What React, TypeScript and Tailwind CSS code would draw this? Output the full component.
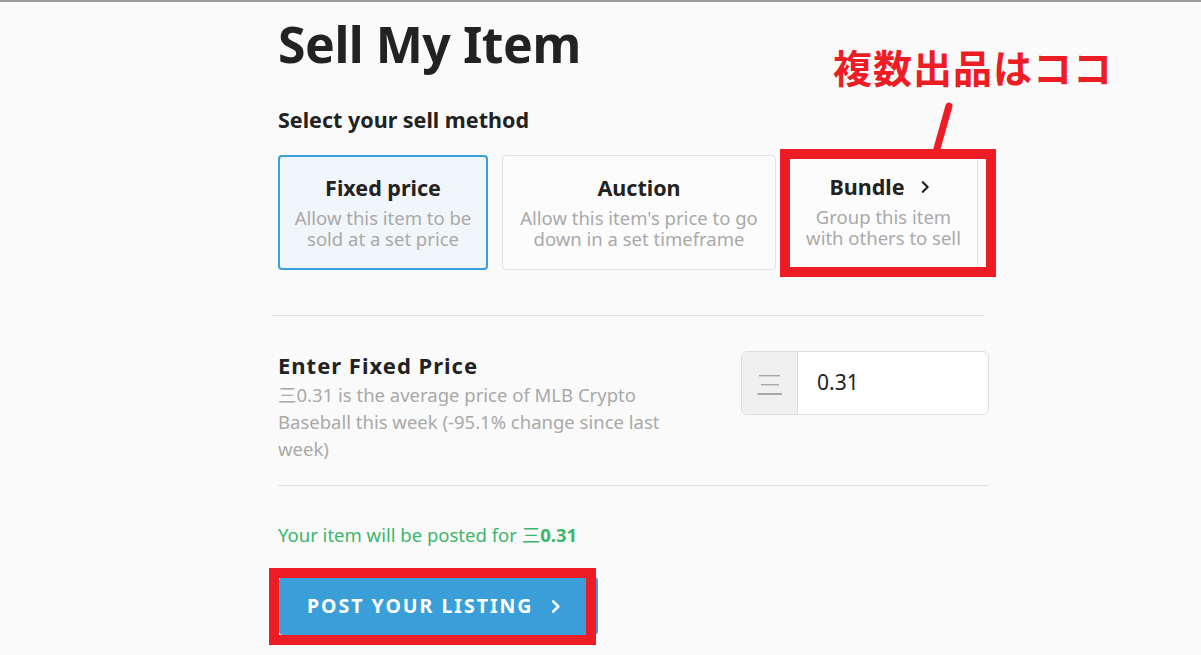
import React from "react";

const F = { fontFamily: '"Noto Sans", "Noto Sans CJK JP", sans-serif' };
const CJK = { fontFamily: '"Noto Sans CJK JP", sans-serif' };

function Chevron({ className = "", w = 2.4 }: { className?: string; w?: number }) {
  return (
    <svg viewBox="0 0 10 16" className={className} fill="none" stroke="currentColor" strokeWidth={w} strokeLinecap="round" strokeLinejoin="round">
      <path d="M2.5 2.5 L8 8 L2.5 13.5" />
    </svg>
  );
}

export default function App() {
  return (
    <div className="relative w-[1201px] h-[655px] overflow-hidden bg-[#fafafa] text-[#222]" style={F}>
      <div className="h-[2px] bg-[#9b9b9b]" />
      <div className="ml-[278px] w-[712px]">
        <h1 className="mt-[14px] h-[56px] text-[50px] leading-[56px] font-bold tracking-[-0.5px] text-[#222]">Sell My Item</h1>
        <div className="mt-[35px] text-[21.5px] leading-[26px] font-bold text-[#222]">Select your sell method</div>
        <div className="mt-[22px] flex gap-[14px]">
          <div className="w-[210px] h-[115px] rounded-[4px] border-2 border-[#3a9fdc] bg-[#f1f6fa] flex flex-col items-center pt-[17px]">
            <div className="text-[21.5px] leading-[28px] font-bold">Fixed price</div>
            <div className="mt-[5px] text-[18.5px] leading-[21px] text-[#a9a9a9] text-center whitespace-nowrap">Allow this item to be<br />sold at a set price</div>
          </div>
          <div className="w-[274px] h-[115px] rounded-[4px] border border-[#e2e2e2] bg-[#fcfcfc] flex flex-col items-center pt-[18px]">
            <div className="text-[21.5px] leading-[28px] font-bold">Auction</div>
            <div className="mt-[5px] text-[18.5px] leading-[21px] text-[#a9a9a9] text-center whitespace-nowrap">Allow this item's price to go<br />down in a set timeframe</div>
          </div>
          <div className="w-[188px] h-[115px] border-r border-[#e2e2e2] bg-[#fcfcfc] flex flex-col items-center pt-[18px]">
            <div className="flex items-center gap-[15px] text-[21.5px] leading-[28px] font-bold -ml-[8px]">
              Bundle
              <Chevron className="w-[10px] h-[14px] text-[#222]" w={2.6} />
            </div>
            <div className="mt-[5px] text-[18.5px] leading-[21px] text-[#a9a9a9] text-center whitespace-nowrap">Group this item<br />with others to sell</div>
          </div>
        </div>
      </div>
      <div className="ml-[272px] w-[712px] mt-[45px] h-px bg-[#e3e3e3]" />
      <div className="ml-[278px] w-[711px] flex justify-between mt-[34px]">
        <div className="w-[420px]">
          <div className="text-[22px] leading-[30px] font-bold tracking-[1px] text-[#222]">Enter Fixed Price</div>
          <div className="mt-[1px] text-[18.5px] leading-[27px] text-[#a9a9a9] whitespace-nowrap">
            <span style={CJK}>三</span>0.31 is the average price of MLB Crypto<br />Baseball this week (-95.1% change since last<br />week)
          </div>
        </div>
        <div className="w-[248px] h-[64px] mt-[1px] rounded-[6px] border border-[#dedede] bg-white flex overflow-hidden">
          <div className="w-[56px] bg-[#f0f0f0] border-r border-[#dedede] flex items-center justify-center">
            <svg width="26" height="24" viewBox="0 0 26 24">
              <rect x="2" y="4" width="21" height="1.4" fill="#a8a8a8" />
              <rect x="4" y="13" width="18" height="1.4" fill="#a8a8a8" />
              <rect x="0.5" y="22" width="24.5" height="2" fill="#a8a8a8" />
            </svg>
          </div>
          <div className="flex-1 flex items-center pl-[19px] text-[21px] text-[#222]">0.31</div>
        </div>
      </div>
      <div className="ml-[278px] w-[711px] mt-[23px] h-px bg-[#e3e3e3]" />
      <div className="ml-[278px] mt-[36px] text-[18.5px] leading-[24px] text-[#3cb56d]">
        Your item will be posted for <span style={CJK}>三</span><span className="font-bold">0.31</span>
      </div>
      <button className="ml-[279px] mt-[30px] w-[319px] h-[58px] rounded-[4px] bg-[#3a9fd9] text-white flex items-center pl-[28px] gap-[16px]">
        <span className="text-[19.5px] font-bold tracking-[2px]">POST YOUR LISTING</span>
        <Chevron className="w-[11px] h-[15px]" w={2.8} />
      </button>

      {/* annotations */}
      <div className="absolute left-[833px] top-[41px] text-[39px] leading-[50px] font-bold text-[#ee1c25] tracking-[1px]" style={CJK}>複数出品はココ</div>
      <svg className="absolute left-0 top-0" width="1201" height="655" style={{ pointerEvents: "none" }}>
        <line x1="949" y1="106" x2="936" y2="152" stroke="#ee1c25" strokeWidth="7" strokeLinecap="round" />
      </svg>
      <div className="absolute left-[780px] top-[149px] w-[216px] h-[128px] border-[10px] border-[#ee1c25]" />
      <div className="absolute left-[269px] top-[568px] w-[327px] h-[77px] border-[10px] border-[#ee1c25]" />
    </div>
  );
}
